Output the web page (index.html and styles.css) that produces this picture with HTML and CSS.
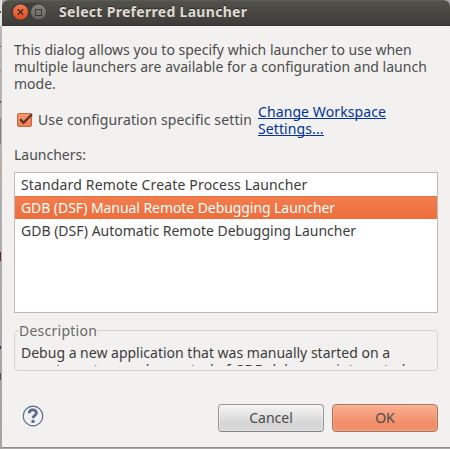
FILE: index.html
```
<!DOCTYPE html>
<html lang="en">
<head>
<meta charset="utf-8">
<title>Select Preferred Launcher</title>
<link rel="stylesheet" href="styles.css">
</head>
<body>
<div class="backdrop"><i class="m1"></i><i class="m2"></i><i class="m3"></i><i class="m4"></i><i class="m5"></i><i class="m6"></i><i class="m7"></i><i class="m8"></i><i class="m9"></i></div>
<main class="window">
  <header class="titlebar">
    <svg class="controls" width="36" height="18" viewBox="0 0 36 18">
      <defs>
        <linearGradient id="close" x1="0" y1="0" x2="0" y2="1"><stop offset="0" stop-color="#f67b54"/><stop offset="1" stop-color="#df4b1f"/></linearGradient>
        <linearGradient id="max" x1="0" y1="0" x2="0" y2="1"><stop offset="0" stop-color="#85847d"/><stop offset="1" stop-color="#64635d"/></linearGradient>
      </defs>
      <rect width="36" height="18" rx="9" fill="#403f3a"/>
      <circle cx="9.5" cy="9" r="7.6" fill="url(#close)"/>
      <path d="M6.8 6.3l5.4 5.4M12.2 6.3l-5.4 5.4" stroke="#3c2b22" stroke-width="1.3"/>
      <circle cx="27.5" cy="9" r="7.6" fill="url(#max)"/>
      <rect x="24.5" y="6.5" width="6" height="6" fill="none" stroke="#3b3a36"/>
    </svg>
    <h1 class="title">Select Preferred Launcher</h1>
  </header>
  <section class="content">
    <p class="intro"><span class="in1">This dialog allows you to specify which launcher to use when</span><span class="in2">multiple launchers are available for a configuration and launch</span><span class="in3">mode.</span></p>
    <div class="option">
      <svg class="check" width="18" height="17" viewBox="0 0 18 17">
        <defs><linearGradient id="box" x1="0" y1="0" x2="0" y2="1"><stop offset="0" stop-color="#fa9a72"/><stop offset="1" stop-color="#f07c50"/></linearGradient></defs>
        <rect x="0.5" y="2.5" width="14" height="13" rx="1.5" fill="url(#box)" stroke="#c0663f"/>
        <path d="M3.2 8.2l3.3 3.6L15 3.2" fill="none" stroke="#5a3226" stroke-width="2.2"/>
      </svg>
      <label class="option-label"><span>Use configuration specific settings</span></label>
      <a class="link"><span class="k1">Change Workspace</span><span class="k2">Settings...</span></a>
    </div>
    <div class="list-label"><span>Launchers:</span></div>
    <ul class="list">
      <li><span class="l1">Standard Remote Create Process Launcher</span></li>
      <li class="selected"><span class="l2">GDB (DSF) Manual Remote Debugging Launcher</span></li>
      <li><span class="l3">GDB (DSF) Automatic Remote Debugging Launcher</span></li>
    </ul>
    <fieldset class="group">
      <legend><span>Description</span></legend>
      <div class="desc"><span class="d1">Debug a new application that was manually started on a</span><span class="d2">remote system under control of GDB debugger integrated</span></div>
    </fieldset>
    <footer class="actions">
      <svg class="help" width="22" height="22" viewBox="0 0 22 22">
        <circle cx="11" cy="11" r="9.8" fill="#f0f1f4" stroke="#566985" stroke-width="1.2"/>
        <path d="M7.2 8.2C7.2 3.8 14.4 3.9 14.4 7.9C14.4 10.3 11 10.4 11 13.2" fill="none" stroke="#566b8d" stroke-width="2.8"/>
        <circle cx="11" cy="16.4" r="1.7" fill="#566b8d"/>
      </svg>
      <button class="button">Cancel</button>
      <button class="button primary">OK</button>
    </footer>
  </section>
</main>
</body>
</html>
```

FILE: styles.css
```
* { box-sizing: border-box; }
body { margin: 0; width: 450px; height: 449px; overflow: hidden; display: flex; background: #aaa9a7; font: 14px/17px "Noto Sans", "Open Sans", sans-serif; color: #4c4c4c; }
span { white-space: nowrap; }
.backdrop { position: relative; width: 2px; height: 449px; background: linear-gradient(#e2e2e2 0 26px, #b8b7b5 26px, #a5a4a2 440px); }
.backdrop i { position: absolute; left: 0; width: 1px; height: 2px; background: #55534f; }
.backdrop .m1 { top: 11px; }
.backdrop .m2 { top: 46px; height: 1px; }
.backdrop .m3 { top: 70px; background: #6f9fb0; }
.backdrop .m4 { top: 101px; }
.backdrop .m5 { top: 118px; height: 26px; background: #858482; }
.backdrop .m6 { top: 170px; background: #c8a34e; }
.backdrop .m7 { top: 252px; height: 9px; background: #5b2b2d; }
.backdrop .m8 { top: 346px; height: 3px; background: #253855; }
.backdrop .m9 { top: 373px; height: 7px; }
.window { width: 448px; height: 448px; background: #f2f1f0; border-bottom: 1px solid #8f8e8b; border-radius: 6px 6px 0 0; overflow: hidden; }
.titlebar { display: flex; align-items: flex-start; height: 26px; padding: 2px 0 0 9px; background: linear-gradient(#52514b, #3d3c38); border-bottom: 1px solid #32312e; border-top: 1px solid #5c5b54; }
.controls { flex: none; }
.title { margin: 0 0 0 12px; font-size: 14px; line-height: 17px; font-weight: 700; letter-spacing: 0.3px; color: #dfdbd2; text-shadow: 0 -1px #2b2a27; white-space: nowrap; }
.content { padding: 15px 12px 0 12px; }
.intro { margin: 0; }
.intro span, .link span, .desc span { display: block; width: max-content; }
.in2 { letter-spacing: 0.015px; }
.option { display: flex; margin-top: 11px; height: 35px; }
.check { flex: none; margin: 8px 0 0 3px; }
.option-label { margin: 8px 0 0 3px; width: 213px; height: 20px; overflow: hidden; letter-spacing: 0.12px; }
.link { margin-left: 7px; color: #00349a; letter-spacing: 0.1px; }
.link span { height: 16px; border-bottom: 1px solid #00349a; margin-bottom: 1px; }
.list-label { margin-top: 8px; height: 21px; }
.list { list-style: none; margin: 5px 0 0; padding: 0; height: 141px; border: 1px solid #bdbbb6; background: #fff; color: #3c3c3c; }
.list li { height: 23px; padding: 3px 0 0 6px; }
.list .selected { color: #fff; background: linear-gradient(#f47c4c, #ec6e3c); border-top: 1px solid #e57143; padding-top: 2px; }
.l1 { letter-spacing: 0.15px; }
.l2 { letter-spacing: -0.07px; }
.group { margin: 9px 0 0; padding: 0; height: 49px; min-width: 0; border: 1px solid #d6d4d1; border-radius: 4px; }
.group legend { margin-left: 4px; padding: 0; height: 17px; color: #686866; letter-spacing: 0.25px; }
.desc { margin: 5px 0 0 6px; height: 22px; overflow: hidden; color: #3c3c3c; }
.d2 { letter-spacing: 0.04px; }
.actions { display: flex; align-items: center; margin-top: 33px; height: 28px; }
.help { margin: 0 auto 4px 8px; }
.button { width: 106px; height: 28px; padding: 0 0 1px; margin-left: 8px; border: 1px solid #9a9897; border-bottom-color: #858383; border-radius: 4px; font: inherit; color: #4c4c4c; background: linear-gradient(#f5f5f5, #d5d5d5 70%, #dadada); box-shadow: inset 0 0 2px #fff; }
.primary { border-color: #a77661; background: linear-gradient(#fbb093, #f08d66 70%, #f29470); box-shadow: inset 0 0 2px #ffc5ac; }
```
